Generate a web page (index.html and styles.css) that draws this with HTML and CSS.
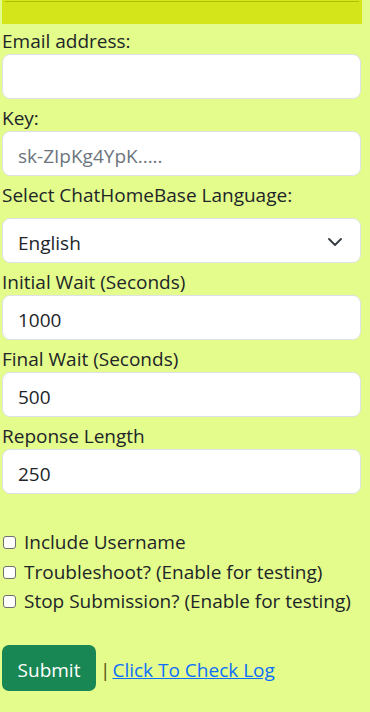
FILE: index.html
```html
<!DOCTYPE html>
<html>
<head>
<meta charset="utf-8">
<link rel="stylesheet" href="styles.css">
</head>
<body>
<div class="page">
  <div class="topbar"><div class="topline"></div></div>
  <form class="form">
    <label class="lbl first" for="email">Email address:</label>
    <input class="ctl" id="email" type="email">
    <label class="lbl" for="key">Key:</label>
    <input class="ctl" id="key" type="text" placeholder="sk-ZIpKg4YpK.....">
    <label class="lbl lbl-select" for="lang">Select ChatHomeBase Language:</label>
    <div class="select">
      <span>English</span>
      <svg class="chev" width="14" height="8" viewBox="0 0 14 8"><path d="M1 1l6 6 6-6" fill="none" stroke="#343a40" stroke-width="1.8" stroke-linecap="round" stroke-linejoin="round"/></svg>
    </div>
    <label class="lbl" for="iw">Initial Wait (Seconds)</label>
    <input class="ctl" id="iw" type="text" value="1000">
    <label class="lbl" for="fw">Final Wait (Seconds)</label>
    <input class="ctl" id="fw" type="text" value="500">
    <label class="lbl" for="rl">Reponse Length</label>
    <input class="ctl" id="rl" type="text" value="250">
    <div class="checks">
      <label class="chk"><span class="box"></span>Include Username</label>
      <label class="chk"><span class="box"></span>Troubleshoot? (Enable for testing)</label>
      <label class="chk"><span class="box"></span>Stop Submission? (Enable for testing)</label>
    </div>
    <div class="actions">
      <button type="button" class="btn">Submit</button>
      <span class="sep">|</span>
      <a class="link" href="#">Click To Check Log</a>
    </div>
  </form>
</div>
</body>
</html>
```

FILE: styles.css
```css
html, body {
  margin: 0;
  padding: 0;
  background: #e3fc8b;
}
body {
  font-family: "Open Sans", "Noto Sans", sans-serif;
  font-size: 19px;
  color: #212529;
}
.page {
  width: 359px;
  padding-left: 2px;
}
.topbar {
  height: 24px;
  width: 360px;
  background: #d4e619;
  padding: 1px 3px 0;
  box-sizing: border-box;
}
.topline {
  height: 1px;
  background: #b0c000;
}
.form {
  display: flex;
  flex-direction: column;
}
.lbl {
  display: block;
  line-height: 24px;
  padding-top: 2px;
  margin: 5px 0 1px;
  white-space: nowrap;
}
.lbl.first {
  margin-top: 3px;
}
.lbl-select {
  margin-bottom: 11px;
}
.ctl, .select {
  box-sizing: border-box;
  height: 45px;
  width: 359px;
  border: 1px solid #dee2e6;
  border-radius: 8px;
  background: #fff;
  padding: 4px 15px 0;
  font-family: inherit;
  font-size: 19px;
  color: #212529;
  outline: none;
}
.ctl::placeholder {
  color: #6c757d;
}
.select {
  display: flex;
  align-items: center;
  justify-content: space-between;
}
.chev {
  margin-right: 3px;
  margin-top: -2px;
}
.checks {
  margin-top: 34px;
  display: flex;
  flex-direction: column;
}
.chk {
  display: flex;
  align-items: center;
  line-height: 29.5px;
  white-space: nowrap;
}
.box {
  width: 11px;
  height: 11px;
  border: 1px solid #6f6f6f;
  border-radius: 3px;
  background: #fff;
  margin: 0 8px 0 1px;
  flex: none;
}
.actions {
  margin-top: 28px;
  display: flex;
  align-items: center;
}
.btn {
  height: 46px;
  width: 94px;
  border: none;
  border-radius: 7px;
  background: #198754;
  color: #fff;
  font-family: inherit;
  font-size: 19px;
  padding: 4px 0 0;
}
.sep {
  margin-left: 4px;
  margin-right: 2px;
  line-height: 24px;
  padding-top: 4px;
  color: #5a4a10;
}
.link {
  color: #0d6efd;
  text-decoration: underline;
  line-height: 24px;
  padding-top: 4px;
}
```
